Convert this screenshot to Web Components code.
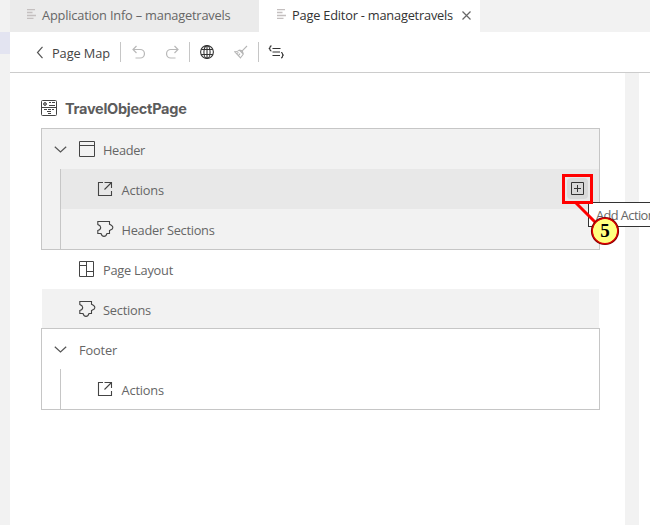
<!DOCTYPE html>
<html lang="en">
<head>
<meta charset="utf-8">
<title>Page Editor</title>
<style>
html,body{margin:0;width:650px;height:525px;overflow:hidden;background:#fff}
</style>
</head>
<body>
<page-editor></page-editor>
<script>
const define = (name, html, connected) => {
  const t = document.createElement('template');
  t.innerHTML = html;
  customElements.define(name, class extends HTMLElement {
    connectedCallback() {
      if (this.shadowRoot) return;
      this.attachShadow({mode: 'open'}).append(t.content.cloneNode(true));
      if (connected) connected.call(this, this.shadowRoot);
    }
  });
};

const icons = {
  doc: [9, 10, '<path d="M0 .5h8M0 3.500h5.500M0 6.500h9M0 9.500h6.500" stroke="#c4bfbf" stroke-width="1.500"/>'],
  close: [9, 9, '<path d="M.5 .5l8 8M8.500 .5l-8 8" stroke="#666" stroke-width="1.200"/>'],
  back: [8, 13, '<path d="M6.500 .8L1.500 6.500l5 5.700" stroke="#555" stroke-width="1.200"/>'],
  undo: [13, 14, '<path d="M4.500 1L1 4.500L4.500 8M1 4.500H8.200a4.200 4.200 0 0 1 0 8.500H3.500" stroke="#b9b9b9" stroke-width="1.200"/>'],
  redo: [13, 14, '<path d="M8.500 1L12 4.500L8.500 8M12 4.500H4.800a4.200 4.200 0 0 0 0 8.500H9.500" stroke="#b9b9b9" stroke-width="1.200"/>'],
  globe: [14, 14, '<g stroke="#333" stroke-width="1.100"><circle cx="7" cy="7" r="6.400"/><ellipse cx="7" cy="7" rx="3.100" ry="6.400"/><path d="M1.200 4.500h11.600M1.200 9.500h11.600M7 .6v12.800"/></g>'],
  brush: [14, 14, '<path d="M13 1L8.200 5.800M5.300 5l4 4M5.300 5C4 6.500 2.500 6.800 .8 6.800L6.500 12.800C7.500 11.500 8.500 10.500 9.300 9L8.200 5.800 5.300 5M2.500 8.500l2-1M4.500 10.700l1.500-2" stroke="#b5b5b5" stroke-width="1.100"/>'],
  code: [17, 14, '<path d="M3.500 .8C2 .8 2 1.500 2 2.500c0 .8-.5 1-1.300 1 .8 0 1.300.3 1.300 1 0 1 .2 1.500 1.500 1.500M4.500 3.500h8M4.500 7h7.500M4.500 10.500h7.500M13 7.500c1.500 0 1.500.6 1.500 1.600 0 .8.400 1 1.200 1-.8 0-1.200.3-1.200 1.200 0 1.100-.2 1.700-1.500 1.700" stroke="#333" stroke-width="1.200"/>'],
  page: [16, 16, '<g stroke="#444"><rect x=".5" y=".5" width="15" height="15" rx="1"/><circle cx="4" cy="4" r="1.400" fill="#aaa"/><path d="M8 2.500h2M11 2.500h3M8 5.500h6M1 7.500h14M3 9.500h3M7 9.500h3M11 9.500h2M6 11.500h4M7 13.500h3"/></g>'],
  chevron: [13, 7, '<path d="M.8 .8L6.500 6L12.200 .8" stroke="#555" stroke-width="1.200"/>'],
  header: [16, 16, '<path d="M.5 .5h15v15H.5zM.5 4.500h15" stroke="#444"/>'],
  action: [16, 16, '<path transform="translate(1 1)" d="M5 .5H.5v13h13V9M6.500 .5h7V6M13.500 .5L6.500 7.500" stroke="#444" stroke-width="1.100"/>'],
  puzzle: [17, 16, '<path d="M.8 .5H12.500V3.300C13.500 3.700 14.300 4.200 15.300 5.200Q16.300 6.500 15.300 8C14.300 8.400 13.300 9.300 12.500 9.500V12.500H10C9.500 14 9 15.400 7 15.400S4.500 14 4 12.500H.8V9.500C2 9.200 3.700 8.500 3.700 6.500S2 4 .8 3.500Z" stroke="#444" stroke-width="1.100"/>'],
  layout: [15, 16, '<path d="M.5 .5h14v15H.5zM7.500 .5v15M.5 4.500h7M7.500 10.500h7" stroke="#444"/>'],
  add: [13, 13, '<path d="M.5 .5h12v12H.5zM6.500 3v7M3 6.500h7" stroke="#333"/>']
};
define('ui-icon', '<style>:host{display:block;flex:none}svg{display:block}</style>', function (root) {
  const [w, h, body] = icons[this.getAttribute('name')];
  root.innerHTML += `<svg width="${w}" height="${h}" viewBox="0 0 ${w} ${h}" fill="none">${body}</svg>`;
});

// Tracks its text out or in so that it fills the length in the fit attribute.
define('ui-label', `<style>:host{display:block;flex:none;white-space:nowrap;font:12.8px/18px "Open Sans","Noto Sans",sans-serif;color:#666}
:host([title-text]){font:700 14.5px/18px Inter,"Liberation Sans",sans-serif;color:#5c5c5c}
span{display:inline-block}</style><span><slot></slot></span>`, function (root) {
  const s = root.querySelector('span'), n = this.textContent.length;
  const fit = +this.getAttribute('fit');
  if (fit) s.style.letterSpacing = (fit - s.getBoundingClientRect().width) / n + 'px';
});

define('editor-tab', `<style>:host{box-sizing:border-box;display:flex;width:249px;height:32px;padding:6px 0 0 17px;background:#ebebeb}
:host([active]){width:221px;padding-left:18px;background:#fff}ui-icon{margin:3px 6px 0 0}
.x{display:none;margin:5px 0 0 9px}:host([active]) .x{display:block}:host([active]) ::slotted(ui-label){color:#333}</style>
<ui-icon name="doc"></ui-icon><slot></slot><ui-icon class="x" name="close"></ui-icon>`);

define('tool-bar', `<style>:host{box-sizing:border-box;display:flex;align-items:center;height:41px;padding-left:26px;border-bottom:1px solid #ccc}
i{width:1px;height:20px;background:#c6c6c6;margin-bottom:1px}ui-icon{margin-bottom:2px}ui-label{color:#444;margin:2px 10px 0 8px}</style>
<ui-icon name="back" style="margin-bottom:0"></ui-icon><ui-label fit="58">Page Map</ui-label><i></i>
<ui-icon name="undo" style="margin-left:11px;margin-bottom:0"></ui-icon><ui-icon name="redo" style="margin:0 10px 0 21px"></ui-icon><i></i>
<ui-icon name="globe" style="margin:0 0 0 10px"></ui-icon><ui-icon name="brush" style="margin:0 10px 0 20px"></ui-icon><i></i>
<ui-icon name="code" style="margin-left:9px;margin-bottom:0"></ui-icon>`);

define('tree-row', `<style>:host{box-sizing:border-box;display:flex;align-items:flex-start;height:40px;padding-left:var(--indent,0)}
:host([group]){padding-left:12px}:host([nested]){margin-left:18px;border-left:1px solid #c6c6c6;padding-left:36px}
:host([hot]){background:#e8e8e8}:host([band]){background:#f2f2f2}
.slot{width:24px;flex:none;padding-top:var(--top,12px)}.c{width:25px;flex:none;display:none;padding-top:17px}:host([group]) .c{display:block}
::slotted(ui-label){margin-top:var(--top,12px)}:host([nested]) ::slotted(ui-label){margin-left:.5px}
::slotted(.end){margin:9px 11px 0 auto}</style>
<div class="c"><ui-icon name="chevron"></ui-icon></div><div class="slot"></div><slot></slot>`, function (root) {
  const icon = this.getAttribute('icon'), box = root.querySelector('.slot');
  if (icon) box.innerHTML = `<ui-icon name="${icon}"></ui-icon>`; else box.remove();
});

define('tree-panel', `<style>:host{display:block;border:1px solid #c6c6c6}:host([shaded]){background:#f2f2f2}</style><slot></slot>`);

define('add-button', `<style>:host{display:grid;place-items:center;width:21px;height:21px;border-radius:4px;background:#d8d8d8}</style><ui-icon name="add"></ui-icon>`);

define('tool-tip', `<style>:host{box-sizing:border-box;display:block;position:absolute;left:588px;top:202px;width:80px;height:25px;border:1px solid #333;background:#fff;padding:3px 0 0 7px}</style><slot></slot>`);

define('step-callout', `<style>:host{position:absolute;left:562px;top:174px;width:60px;height:74px}svg{position:absolute;left:0;top:0}
b{position:absolute;left:29px;top:43px;width:28px;height:28px;text-align:center;font:bold 19px/28px "Liberation Serif",serif;color:#000}</style>
<svg width="60" height="74" fill="none"><rect x="1.500" y="1.500" width="28" height="27" stroke="#f00" stroke-width="3"/><path d="M14 29L35 50" stroke="#f00" stroke-width="3"/><circle cx="43" cy="57" r="13.200" fill="#ffff80" stroke="#800000" stroke-width="1.800"/><circle cx="43" cy="57" r="12.600" stroke="#e00000" stroke-width="1.200"/></svg><b><slot></slot></b>`);

define('page-editor', `<style>
:host{display:grid;grid-template-columns:10px 640px;width:650px;height:525px;overflow:hidden;position:relative}
.rail{background:#f2f2f2;padding-top:32px}.rail i{display:block;height:22px;background:#e3e4f1}
.main{display:flex;flex-direction:column}.tabs{display:flex;background:#f2f2f2}
.body{flex:1;display:grid;grid-template-columns:615px 14px 1fr}.gutter{background:#f2f2f2}
.tree{padding:27px 25px 0 31px}.title{display:flex;height:28px;gap:8px}
.loose{margin:0 1px}.layout{height:39px;--top:11px}.sections{height:39px}
</style>
<div class="rail"><i></i></div>
<div class="main">
<div class="tabs"><editor-tab><ui-label fit="188.500">Application Info – managetravels</ui-label></editor-tab><editor-tab active><ui-label fit="161">Page Editor - managetravels</ui-label></editor-tab></div>
<tool-bar></tool-bar>
<div class="body"><div class="tree">
<div class="title"><ui-icon name="page"></ui-icon><ui-label title-text fit="121.500">TravelObjectPage</ui-label></div>
<tree-panel shaded>
<tree-row group icon="header"><ui-label fit="42">Header</ui-label></tree-row>
<tree-row nested hot icon="action"><ui-label fit="42.500">Actions</ui-label><add-button class="end"></add-button></tree-row>
<tree-row nested icon="puzzle"><ui-label fit="93">Header Sections</ui-label></tree-row>
</tree-panel>
<div class="loose"><tree-row class="layout" icon="layout" style="--indent:37px"><ui-label fit="70">Page Layout</ui-label></tree-row>
<tree-row class="sections" band icon="puzzle" style="--indent:37px"><ui-label fit="48">Sections</ui-label></tree-row></div>
<tree-panel>
<tree-row group><ui-label fit="38">Footer</ui-label></tree-row>
<tree-row nested icon="action"><ui-label fit="42.500">Actions</ui-label></tree-row>
</tree-panel>
</div><div class="gutter"></div></div>
</div>
<tool-tip><ui-label fit="59">Add Action</ui-label></tool-tip>
<step-callout>5</step-callout>`);
</script>
</body>
</html>
